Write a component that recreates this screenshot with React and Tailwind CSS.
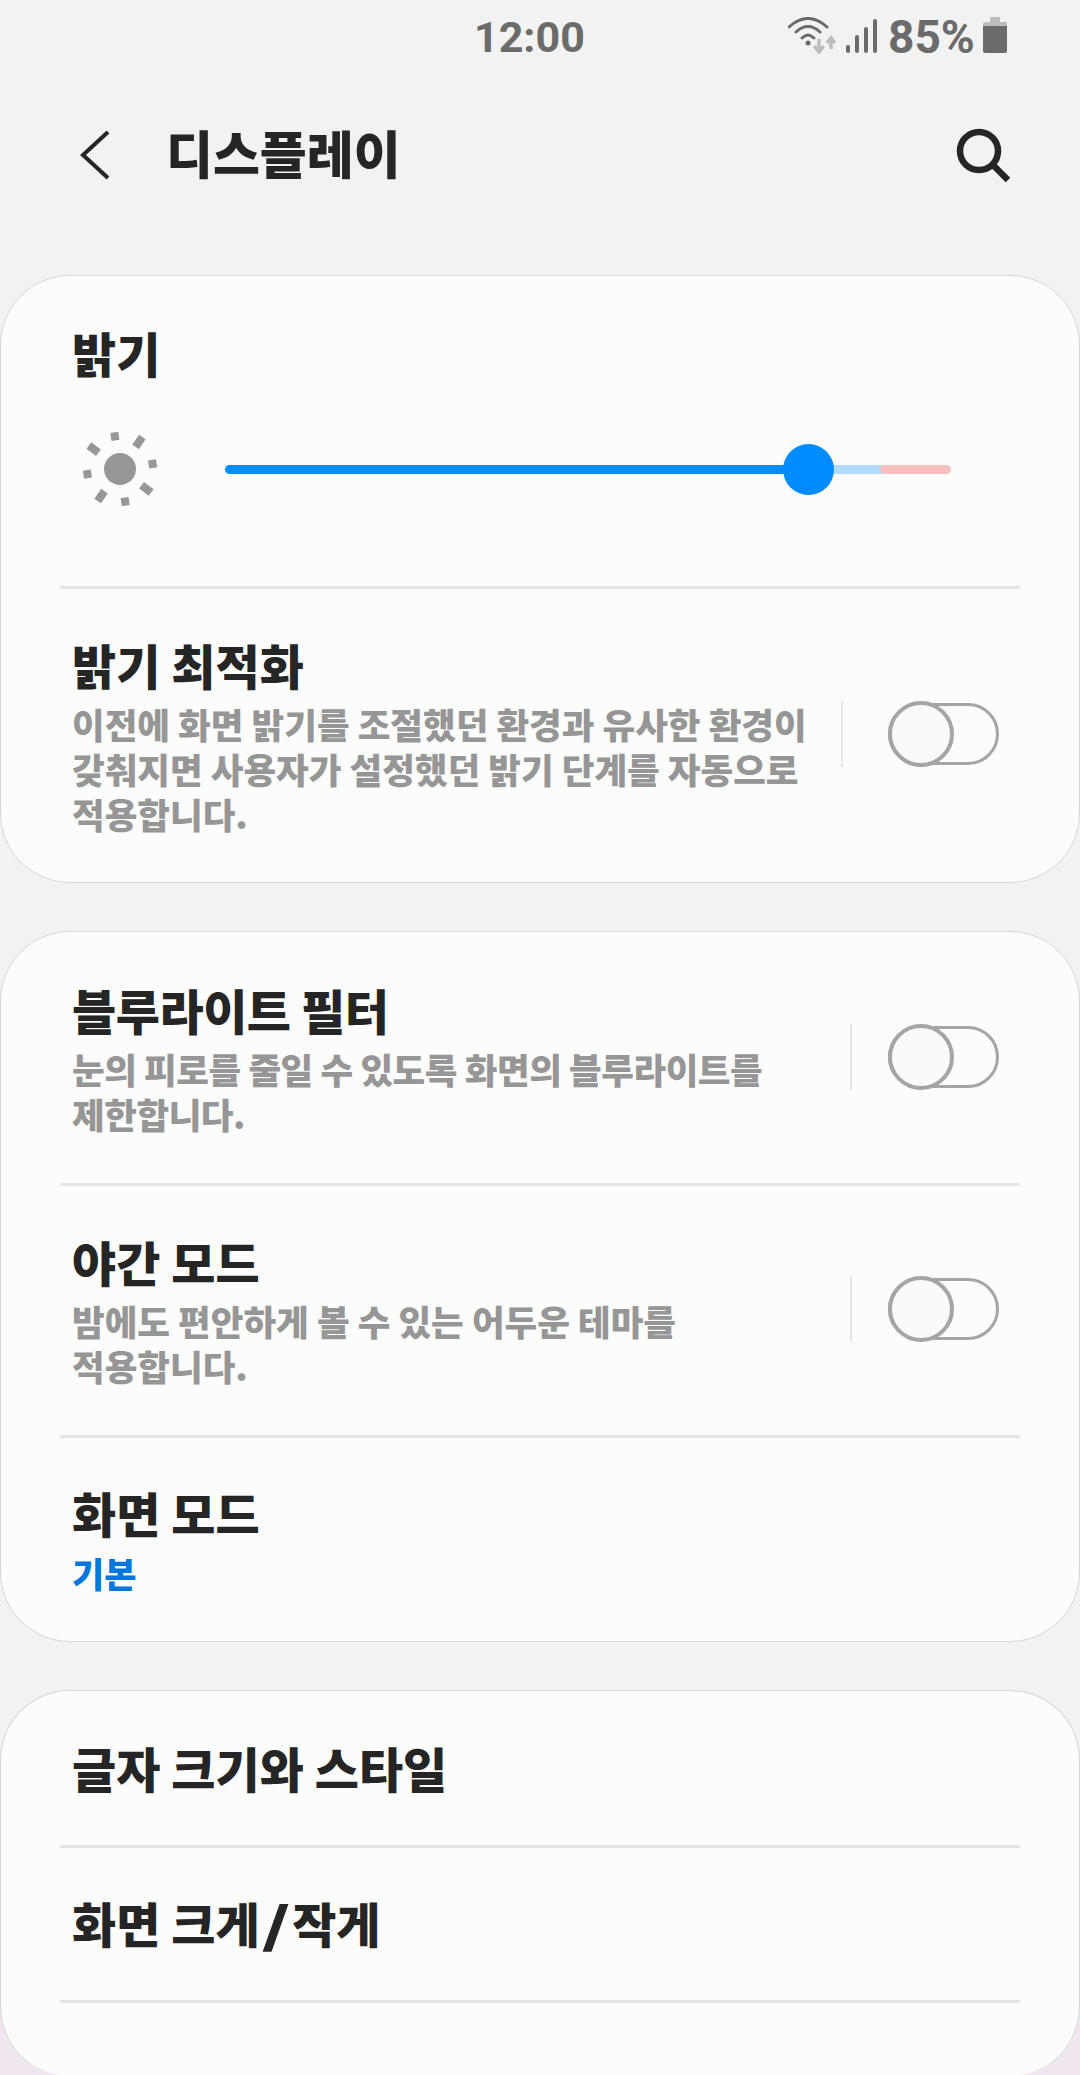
const KR = "font-['Noto_Sans_CJK_KR','Noto_Sans',sans-serif]";

function WifiIcon() {
  return (
    <svg className="-mt-[3px]" width="48" height="37" viewBox="0 0 48 37" fill="none">
      <path d="M1 10Q20 -7 39 10" stroke="#6b6b6b" strokeWidth="3" strokeLinecap="round" />
      <path d="M8 15Q20 4 32 15" stroke="#6b6b6b" strokeWidth="3" strokeLinecap="round" />
      <path d="M14 21Q20 15 26 21" stroke="#6b6b6b" strokeWidth="3" strokeLinecap="round" />
      <circle cx="20" cy="26" r="2.5" fill="#6b6b6b" />
      <path d="M31 22V34M26.5 29L31 35L35.5 29" stroke="#bdbdbd" strokeWidth="3.5" />
      <path d="M43 32V21M39 26L43 21L47 26" stroke="#bdbdbd" strokeWidth="3.5" />
    </svg>
  );
}

function SignalIcon() {
  return (
    <svg className="-mt-[2px]" width="32" height="34" viewBox="0 0 32 34" fill="#6b6b6b">
      <rect x="0" y="26" width="4" height="8" rx="2" />
      <rect x="9" y="16" width="4" height="18" rx="2" />
      <rect x="18" y="8" width="4" height="26" rx="2" />
      <rect x="27" y="0" width="4" height="34" rx="2" />
    </svg>
  );
}

function BatteryIcon() {
  return (
    <svg className="-mt-[4px]" width="24" height="36" viewBox="0 0 24 36">
      <path d="M7 0H17V5H22A2 2 0 0 1 24 7V9H0V7A2 2 0 0 1 2 5H7Z" fill="#bdbdbd" />
      <path d="M0 9H24V34A2 2 0 0 1 22 36H2A2 2 0 0 1 0 34Z" fill="#6b6b6b" />
    </svg>
  );
}

function SunIcon() {
  const rays = [-9, 35, 81, 127, 171, 215, 261, 307];
  return (
    <svg width="80" height="80" viewBox="-40 -40 80 80" fill="#979797">
      <circle r="16" />
      {rays.map((r, i) => {
        const long = i % 2 === 1;
        return <rect key={r} x={-4} y={long ? -39 : -37} width={8} height={long ? 12 : 8} transform={`rotate(${r})`} />;
      })}
    </svg>
  );
}

function Toggle({ divider }) {
  return (
    <div className="flex items-center shrink-0">
      <div className={`w-[2px] h-[66px] bg-[#e6e6e6] ${divider}`} />
      <div className="relative w-[111px] h-[62px] rounded-full border-[3px] border-[#a5a5a5]">
        <div className="absolute left-[-3px] top-[-5px] w-[66px] h-[66px] rounded-full border-[4px] border-[#a5a5a5] bg-[#fafafa]" />
      </div>
    </div>
  );
}

function Divider() {
  return <div className="mx-[59px] h-[3px] bg-[#e5e5e5]" />;
}

function ToggleRow({ title, lines, pad, divider, subWidth, tight = '' }) {
  return (
    <div className={`flex items-center justify-between pl-[71px] pr-[80px] ${pad}`}>
      <div className={`${subWidth} ${tight}`}>
        <div className="text-[48px] leading-[65px] font-black text-[#252525]">{title}</div>
        <div className="mt-[4px]">
          {lines.map((l) => (
            <div key={l} className="text-[35.5px] leading-[45px] font-black text-[#969696] whitespace-nowrap">{l}</div>
          ))}
        </div>
      </div>
      <Toggle divider={divider} />
    </div>
  );
}

export default function App() {
  return (
    <div className={`w-[1080px] h-[2075px] overflow-hidden bg-[#f2f2f2] ${KR}`}>
      {/* status bar */}
      <div className="flex items-center h-[74px] pl-[474px] font-['Roboto',sans-serif] font-bold text-[#6b6b6b]">
        <span className="text-[43px] leading-none w-[314px]">12:00</span>
        <WifiIcon />
        <div className="ml-[10px] flex"><SignalIcon /></div>
        <span className="ml-[10px] w-[85px] text-[46px] leading-none whitespace-nowrap">85%</span>
        <div className="ml-[10px] flex"><BatteryIcon /></div>
      </div>

      {/* header */}
      <div className="flex items-center h-[130px] mt-[13px] pl-[80px] pr-[70px]">
        <svg className="mt-[5px]" width="30" height="50" viewBox="0 0 30 50" fill="none">
          <path d="M28 2L3 25L28 48" stroke="#252525" strokeWidth="4" />
        </svg>
        <h1 className="ml-[56px] text-[51px] font-black text-[#252525] leading-none flex-1">디스플레이</h1>
        <svg className="mt-[5px]" width="54" height="54" viewBox="0 0 54 54" fill="none">
          <circle cx="23" cy="23" r="19" stroke="#252525" strokeWidth="6.5" />
          <path d="M36 36L52 52" stroke="#252525" strokeWidth="6.5" />
        </svg>
      </div>

      {/* brightness card */}
      <section className="mt-[58px] h-[608px] rounded-[70px] border border-[#d6d6d6] bg-[#fcfcfc]">
        <div className="pt-[44px] pl-[71px] text-[48px] leading-[65px] font-black text-[#252525]">밝기</div>
        <div className="flex items-center h-[80px] mt-[44px] pl-[79px]">
          <SunIcon />
          <div className="flex w-[726px] h-[9px] ml-[65px] rounded-full overflow-hidden">
            <div className="w-[560px] bg-[#008cff]" />
            <div className="w-[100px] bg-[#b0dcff]" />
            <div className="flex-1 -ml-[5px] rounded-l-full bg-[#f7c0c0]" />
          </div>
          <div className="w-[51px] h-[51px] -ml-[168px] rounded-full bg-[#008cff]" />
        </div>
        <div className="mt-[77px]"><Divider /></div>
        <ToggleRow
          title="밝기 최적화"
          lines={['이전에 화면 밝기를 조절했던 환경과 유사한 환경이', '갖춰지면 사용자가 설정했던 밝기 단계를 자동으로', '적용합니다.']}
          pad="pt-[43px]"
          divider="mr-[45px]"
          subWidth="w-[760px]"
        />
      </section>

      {/* blue light, night mode, screen mode */}
      <section className="mt-[48px] h-[711px] rounded-[70px] border border-[#d6d6d6] bg-[#fcfcfc]">
        <ToggleRow
          title="블루라이트 필터"
          lines={['눈의 피로를 줄일 수 있도록 화면의 블루라이트를', '제한합니다.']}
          pad="pt-[45px] pb-[47px]"
          divider="mr-[36px]"
          subWidth="w-[770px]"
          tight="tracking-[-0.45px]"
        />
        <Divider />
        <ToggleRow
          title="야간 모드"
          lines={['밤에도 편안하게 볼 수 있는 어두운 테마를', '적용합니다.']}
          pad="pt-[43px] pb-[47px]"
          divider="mr-[36px]"
          subWidth="w-[770px]"
        />
        <Divider />
        <div className="pl-[71px] pt-[42px]">
          <div className="text-[48px] leading-[65px] font-black text-[#252525]">화면 모드</div>
          <div className="mt-[3px] text-[35px] leading-[50px] font-black text-[#0077dd]">기본</div>
        </div>
      </section>

      {/* font and zoom */}
      <div className="mt-[48px] h-[386px] bg-[linear-gradient(#f2f2f2_50%,#f0e6ef_50%)]">
        <section className="h-full rounded-[70px] border-x border-t border-[#d6d6d6] bg-[#fcfcfc]">
          <div className="pl-[71px] pt-[44px] h-[154px] text-[48px] leading-[65px] font-black text-[#252525]">글자 크기와 스타일</div>
          <Divider />
          <div className="pl-[71px] pt-[42px] h-[152px] text-[48px] leading-[65px] font-black text-[#252525]">화면 크게<span className="inline-block mx-[7px] scale-x-[1.6]">/</span>작게</div>
          <Divider />
        </section>
      </div>
    </div>
  );
}
